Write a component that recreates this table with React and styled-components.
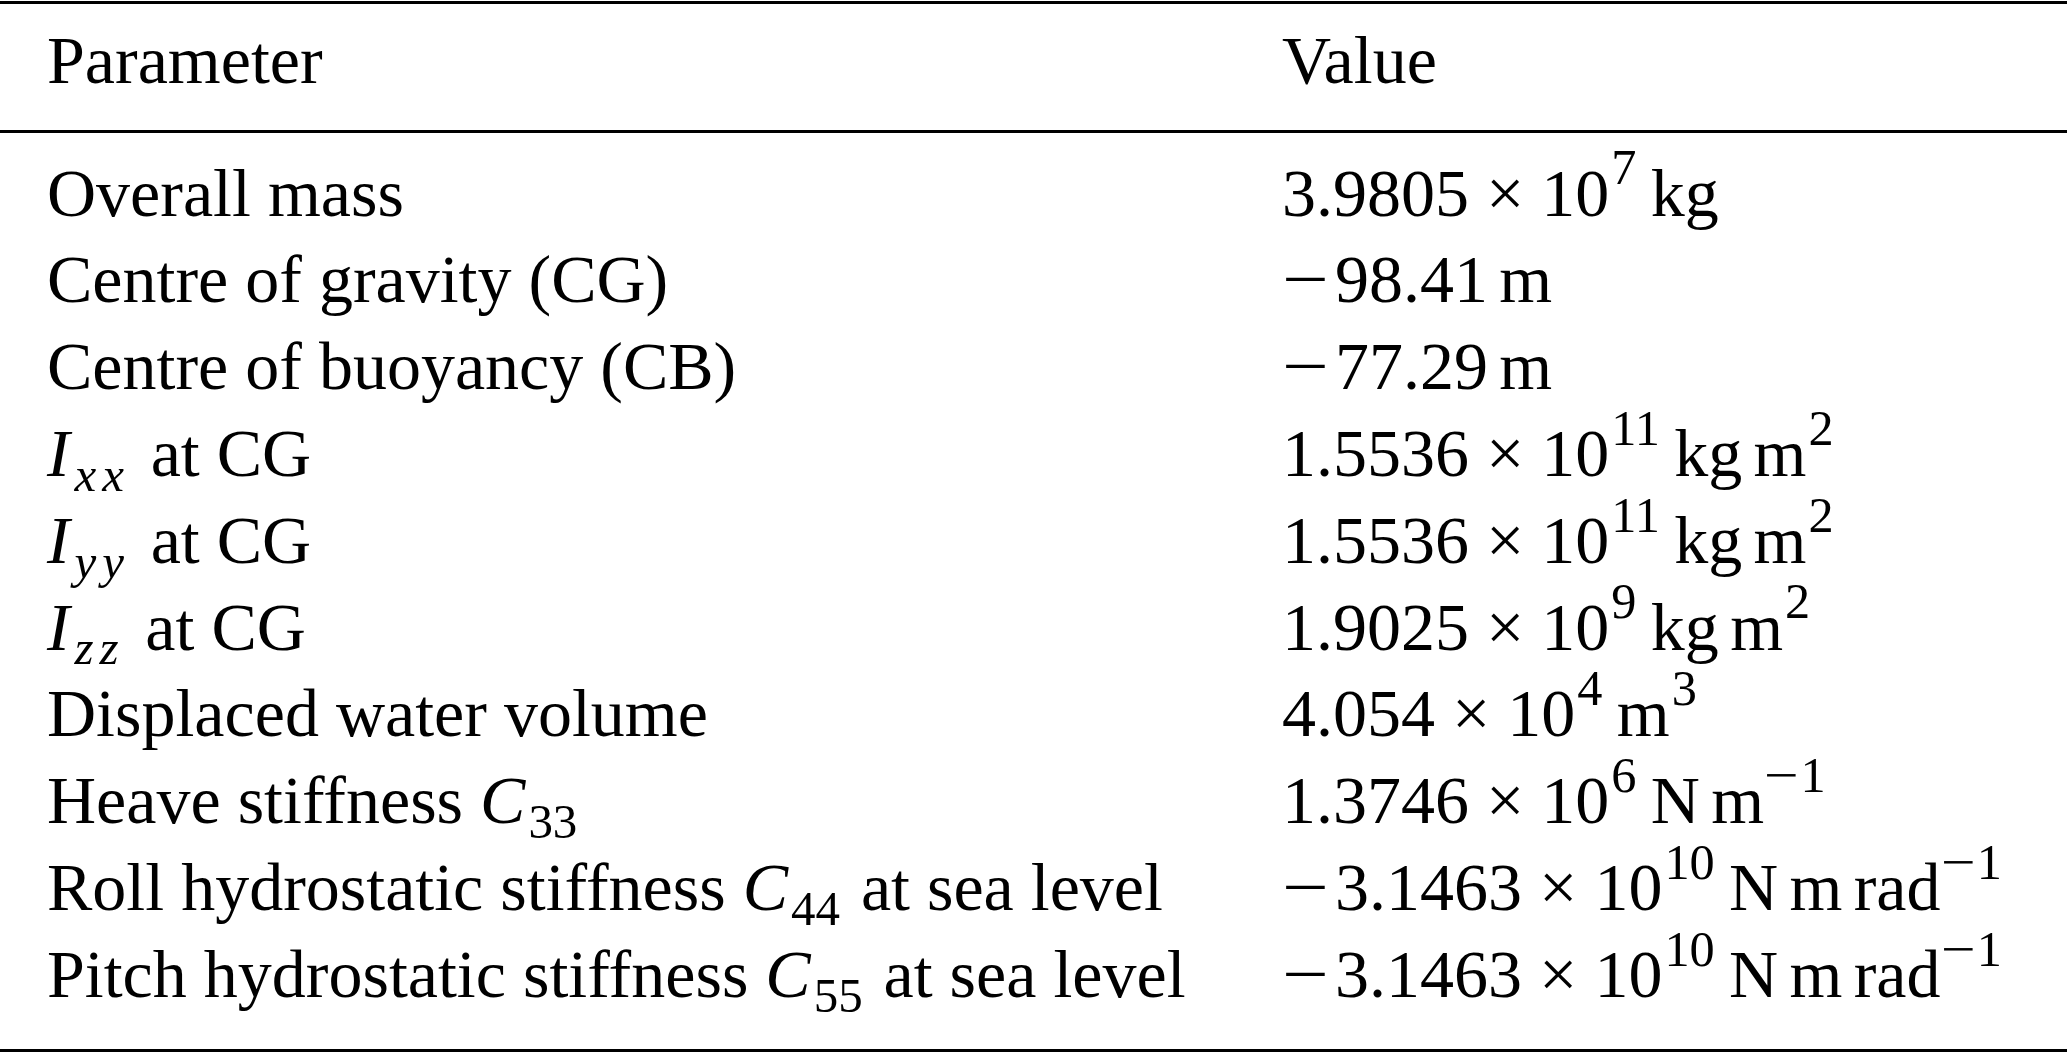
import React from 'react'
import styled, { createGlobalStyle } from 'styled-components'

const GlobalStyle = createGlobalStyle`
  html, body {
    margin: 0;
    padding: 0;
    background: #fff;
  }
  body {
    font-family: "Liberation Serif", "Times New Roman", serif;
    color: #000;
  }
`

const Table = styled.div`
  width: 2067px;
  margin-top: 1px;
  border-top: 3px solid #000;
  border-bottom: 3px solid #000;
  font-size: 68px;
  line-height: 86.8px;
`

const Head = styled.div`
  padding: 12.7px 0 26.5px;
  border-bottom: 3px solid #000;
`

const Body = styled.div`
  padding: 16.7px 0 31.3px;
`

const Row = styled.div`
  display: grid;
  grid-template-columns: 1235px 1fr;
  padding-left: 47px;
  white-space: nowrap;
`

const Cell = styled.div``

const Var = styled.i`
  font-style: italic;
`

// subscripts: math italic letters are wider in TeX, so spread them a bit
const Sub = styled.sub`
  font-size: 0.72em;
  line-height: 0;
  vertical-align: -0.3em;
  margin-left: ${p => (p.$italic ? '0.1em' : '0.06em')};
  margin-right: 0.08em;
  letter-spacing: ${p => (p.$italic ? '0.12em' : '0')};
  font-style: ${p => (p.$italic ? 'italic' : 'normal')};
`

const Sup = styled.sup`
  font-size: 0.74em;
  line-height: 0;
  vertical-align: 0.62em;
  margin-left: ${p => (p.$neg ? '0' : '0.04em')};
  margin-right: 0.06em;
`

const Minus = styled.span`
  display: inline-block;
  width: ${p => (p.$small ? '0.72em' : '0.78em')};
  transform: scaleX(1.22);
  transform-origin: left center;
`

const Thin = styled.span`
  margin-left: 0.1667em;
`

const M = () => <Minus>−</Minus>
const Inv = () => <Sup $neg><Minus $small>−</Minus>1</Sup>

const rows = [
  ['Overall mass', <>3.9805 × 10<Sup>7</Sup><Thin />kg</>],
  ['Centre of gravity (CG)', <><M />98.41<Thin />m</>],
  ['Centre of buoyancy (CB)', <><M />77.29<Thin />m</>],
  [<><Var>I</Var><Sub $italic>xx</Sub> at CG</>, <>1.5536 × 10<Sup>11</Sup><Thin />kg<Thin />m<Sup>2</Sup></>],
  [<><Var>I</Var><Sub $italic>yy</Sub> at CG</>, <>1.5536 × 10<Sup>11</Sup><Thin />kg<Thin />m<Sup>2</Sup></>],
  [<><Var>I</Var><Sub $italic>zz</Sub> at CG</>, <>1.9025 × 10<Sup>9</Sup><Thin />kg<Thin />m<Sup>2</Sup></>],
  ['Displaced water volume', <>4.054 × 10<Sup>4</Sup><Thin />m<Sup>3</Sup></>],
  [<>Heave stiffness <Var>C</Var><Sub>33</Sub></>, <>1.3746 × 10<Sup>6</Sup><Thin />N<Thin />m<Inv /></>],
  [<>Roll hydrostatic stiffness <Var>C</Var><Sub>44</Sub> at sea level</>, <><M />3.1463 × 10<Sup>10</Sup><Thin />N<Thin />m<Thin />rad<Inv /></>],
  [<>Pitch hydrostatic stiffness <Var>C</Var><Sub>55</Sub> at sea level</>, <><M />3.1463 × 10<Sup>10</Sup><Thin />N<Thin />m<Thin />rad<Inv /></>],
]

export default function App() {
  return (
    <>
      <GlobalStyle />
      <Table>
        <Head>
          <Row>
            <Cell>Parameter</Cell>
            <Cell>Value</Cell>
          </Row>
        </Head>
        <Body>
          {rows.map(([param, value], i) => (
            <Row key={i}>
              <Cell>{param}</Cell>
              <Cell>{value}</Cell>
            </Row>
          ))}
        </Body>
      </Table>
    </>
  )
}
